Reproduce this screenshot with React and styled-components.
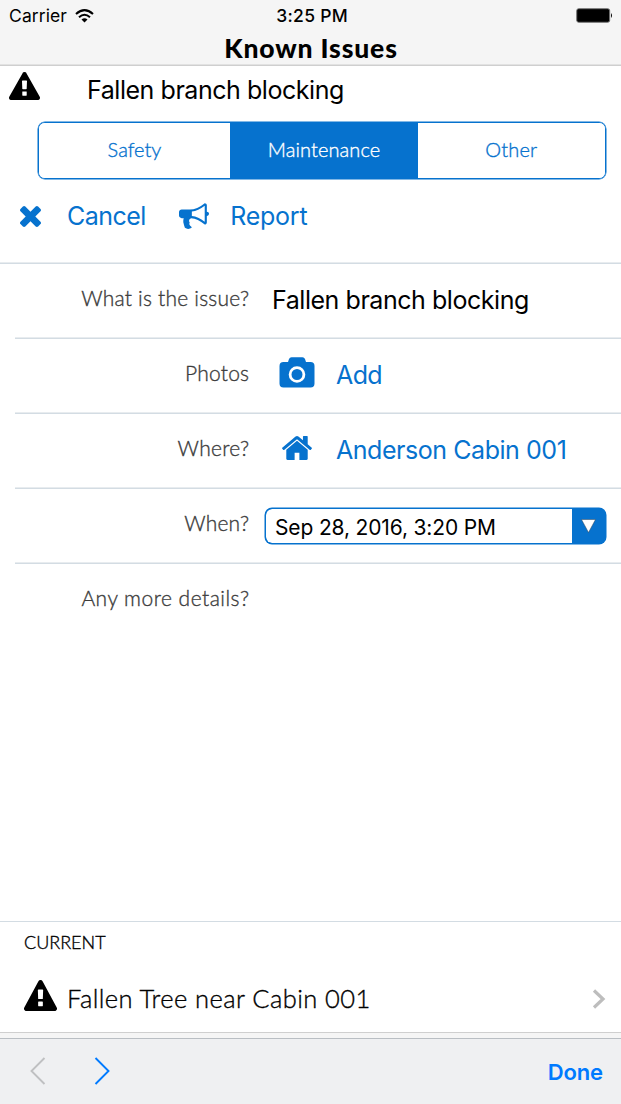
import React from "react";
import styled, { createGlobalStyle } from "styled-components";

const BLUE = "#0672ce";
const system = `Inter, "Liberation Sans", sans-serif`;
const brand = `Lato, "Open Sans", sans-serif`;

const GlobalStyle = createGlobalStyle`
  * { box-sizing: border-box; }
  body { margin: 0; background: #fff; }
  svg { display: block; flex: none; }
  button { border: 0; padding: 0; margin: 0; background: none; font: inherit; color: inherit; letter-spacing: inherit; }
`;

const Screen = styled.main`
  display: flex;
  flex-direction: column;
  width: 621px;
  height: 1104px;
  overflow: hidden;
  background: #fff;
  color: #000;
`;

const Text = styled.span`
  display: inline-block;
  font-family: ${(p) => (p.$brand ? brand : system)};
  font-size: ${(p) => p.$size}px;
  font-weight: ${(p) => p.$weight || (p.$brand ? 300 : 400)};
  -webkit-text-stroke: ${(p) => (p.$brand && !p.$weight ? "0.35px currentColor" : "0")};
  letter-spacing: ${(p) => p.$track || 0}px;
  margin-right: ${(p) => -(p.$track || 0)}px;
  line-height: 32px;
  white-space: nowrap;
`;

const Header = styled.header`
  height: 66px;
  flex: none;
  background: #f5f5f5;
  border-bottom: 1px solid #cfcfcf;
  box-shadow: inset 0 -1px 0 #e2e2e2;
`;

const StatusBar = styled.div`
  display: grid;
  grid-template-columns: 1fr auto 1fr;
  align-items: center;
  height: 32px;
  padding: 0 8px 0 9px;
`;

const Carrier = styled.div`
  display: flex;
  align-items: center;
  gap: 8px;
`;

const Clock = styled.div`
  padding-left: 2px;
`;

const Battery = styled.div`
  justify-self: end;
  padding-bottom: 1px;
`;

const Title = styled.h1`
  display: flex;
  justify-content: center;
  margin: 0;
  height: 32px;
`;

const Summary = styled.div`
  display: flex;
  height: 55px;
  flex: none;
  padding: 6px 9px 0;
  gap: 47px;
`;

const SummaryText = styled.div`
  padding-top: 2px;
`;

const Segments = styled.div`
  display: grid;
  grid-template-columns: 191px 188px 1fr;
  flex: none;
  height: 57px;
  margin: 1px 15.500px 1px 38px;
  border: 1px solid ${BLUE};
  box-shadow: 0 0 0 0.5px ${BLUE};
  border-radius: 7px;
  overflow: hidden;
`;

const Segment = styled.button`
  display: flex;
  justify-content: center;
  padding-top: 10px;
  background: ${(p) => (p.$active ? BLUE : "#fff")};
  color: ${(p) => (p.$active ? "#fff" : BLUE)};
`;

const Actions = styled.div`
  display: flex;
  flex: none;
  height: 84px;
  padding: 20px 20px 0;
  gap: 33px;
  color: ${BLUE};
  border-bottom: 1px solid #d3dce3;
  box-shadow: inset 0 -1px 0 #e8ecef;
`;

const Action = styled.button`
  display: flex;
  height: 32px;
  align-items: center;
  gap: ${(p) => p.$gap}px;
`;

const Form = styled.section`
  flex: 1;
  padding-left: 15px;
`;

const Row = styled.div`
  display: flex;
  align-items: center;
  height: 75px;
  padding: 0 15px 2px 0;
  border-bottom: 1px solid ${(p) => (p.$last ? "transparent" : "#d3dce3")};
  box-shadow: ${(p) => (p.$last ? "none" : "inset 0 -1px 0 #e8ecef")};
`;

const Label = styled.div`
  width: 234px;
  height: 36px;
  flex: none;
  text-align: right;
  color: #3c3c3c;
`;

const Value = styled.div`
  padding-left: 23px;
`;

const LinkValue = styled.button`
  display: flex;
  align-items: center;
  padding-left: 30px;
  color: ${BLUE};
`;

const IconSlot = styled.span`
  display: flex;
  justify-content: center;
  width: 36px;
  height: ${(p) => p.$height}px;
  margin-right: 21px;
`;

const DateSelect = styled.div`
  display: flex;
  flex: 1;
  height: 36px;
  margin: 1px 0.500px 0 15.500px;
  border: 1px solid ${BLUE};
  box-shadow: 0 0 0 0.5px ${BLUE};
  border-radius: 7px;
  overflow: hidden;
  background: ${BLUE};
`;

const DateText = styled.div`
  flex: 1;
  padding: 3px 0 0 9.500px;
  background: #fff;
  border-radius: 6px 0 0 6px;
`;

const DropButton = styled.button`
  display: flex;
  align-items: center;
  justify-content: center;
  width: 33px;
  background: ${BLUE};
`;

const Current = styled.section`
  flex: none;
  height: 112px;
  padding: 4px 15px 0 24px;
  border-top: 1px solid #d3dce3;
  border-bottom: 1px solid #cfcfcf;
`;

const IssueRow = styled.div`
  display: flex;
  align-items: flex-start;
  height: 34px;
  margin-top: 22px;
`;

const IssueName = styled.div`
  flex: 1;
  padding: 2px 0 0 10px;
`;

const Disclosure = styled.div`
  padding-top: 9px;
`;

const Strip = styled.div`
  flex: none;
  height: 5px;
  background: #f5f5f5;
`;

const Toolbar = styled.footer`
  display: flex;
  flex: none;
  align-items: center;
  height: 66px;
  padding: 0 18px 2px 30px;
  gap: 48px;
  background: #eff0f2;
  border-top: 1px solid #b9bec3;
`;

const Done = styled.button`
  margin-left: auto;
  padding-top: 3px;
  color: #007aff;
`;

const Warning = ({ width, height }) => (
  <svg width={width} height={height} viewBox="0 0 1792 1664" preserveAspectRatio="none">
    <path d="M1024 1375v-190q0-14-9.5-23.5t-22.5-9.5h-192q-13 0-22.5 9.5t-9.5 23.5v190q0 14 9.5 23.5t22.5 9.5h192q13 0 22.5-9.5t9.5-23.5zm-2-374l18-459q0-12-10-19-13-11-24-11h-220q-11 0-24 11-10 7-10 21l17 457q0 10 10 16.5t24 6.5h185q14 0 23.5-6.5t10.5-16.5zm-14-934l768 1408q35 63-2 126-17 29-46.5 46t-63.5 17h-1536q-34 0-63.5-17t-46.5-46q-37-63-2-126l768-1408q17-31 47-49t65-18 65 18 47 49z" />
  </svg>
);

const Wifi = () => (
  <svg width="19" height="14" viewBox="0 0 19 14" fill="none" stroke="#000" strokeWidth="2">
    <path d="M1 5Q9.500-2.800 18 5M4 8.200Q9.500 3.200 15 8.200" />
    <path d="M6.500 10.500Q9.500 7.800 12.500 10.500L9.500 13.500Z" fill="#000" stroke="none" />
  </svg>
);

const BatteryIcon = () => (
  <svg width="37" height="15" viewBox="0 0 37 15">
    <rect x=".7" y=".7" width="33" height="13.600" rx="2" stroke="#777" fill="#000" />
    <path d="M35 5Q37 7.500 35 10Z" />
  </svg>
);

const Cross = () => (
  <svg width="21" height="21" viewBox="302 366 1188 1188" fill="currentColor">
    <path d="M1490 1322q0 40-28 68l-136 136q-28 28-68 28t-68-28l-294-294-294 294q-28 28-68 28t-68-28l-136-136q-28-28-28-68t28-68l294-294-294-294q-28-28-28-68t28-68l136-136q28-28 68-28t68 28l294 294 294-294q28-28 68-28t68 28l136 136q28 28 28 68t-28 68l-294 294 294 294q28 28 28 68z" />
  </svg>
);

const Bullhorn = () => (
  <svg width="30" height="30" viewBox="0 0 1792 1792" fill="currentColor">
    <path d="M1664 640q53 0 90.5 37.5t37.5 90.5-37.5 90.5-90.5 37.5v384q0 52-38 90t-90 38q-417-347-812-380-58 19-91 66t-31 100.5 40 92.5q-20 33-23 65.5t6 58 33.5 55 48 50 61.5 50.5q-29 58-111.5 83t-168.5 11.5-132-55.5q-7-23-29.5-87.5t-32-94.5-23-89-15-101 3.5-98.500 22-110.500h-122q-66 0-113-47t-47-113v-192q0-66 47-113t113-47h480q435 0 896-384 52 0 90 38t38 90v384zm-128 604v-954q-394 302-768 343v270q377 42 768 341z" />
  </svg>
);

const Camera = () => (
  <svg width="36" height="31" viewBox="0 0 36 31" fill="currentColor">
    <path d="M4.500 5H9L10 2Q10.700 .3 12.500 .3H23.500Q25.300 .3 26 2L27 5H31.500Q35.500 5 35.500 9V26.500Q35.500 30.500 31.500 30.500H4.500Q.5 30.500 .5 26.500V9Q.5 5 4.500 5Z" />
    <circle cx="18" cy="17.500" r="6.900" fill="none" stroke="#fff" strokeWidth="2.800" />
  </svg>
);

const Home = () => (
  <svg width="30" height="24" viewBox="25 253 1614 1285" preserveAspectRatio="none" fill="currentColor">
    <path d="M1408 992v480q0 26-19 45t-45 19h-384v-384h-256v384h-384q-26 0-45-19t-19-45v-480q0-1 .5-3t.5-3l575-474 575 474q1 2 1 6zm223-69l-62 74q-8 9-21 11h-3q-13 0-21-7l-692-577-692 577q-12 8-24 7-13-2-21-11l-62-74q-8-10-7-23.500t11-21.500l719-599q32-26 76-26t76 26l244 204v-195q0-14 9-23t23-9h192q14 0 23 9t9 23v408l219 182q10 8 11 21.500t-7 23.500z" />
  </svg>
);

const Chevron = ({ left, color }) => (
  <svg width="16" height="28" viewBox="0 0 16 28" fill="none" stroke={color} strokeWidth="1.900">
    <path d={left ? "M14.500 1L1.500 14L14.500 27" : "M1.500 1L14.500 14L1.500 27"} />
  </svg>
);

export default function App() {
  return (
    <Screen>
      <GlobalStyle />
      <Header>
        <StatusBar>
          <Carrier>
            <Text $size={17.500} $track={0.1}>Carrier</Text>
            <Wifi />
          </Carrier>
          <Clock><Text $size={17.500} $weight={500} $track={0.3}>3:25 PM</Text></Clock>
          <Battery><BatteryIcon /></Battery>
        </StatusBar>
        <Title><Text $brand $size={26.500} $weight={900} $track={0.85}>Known Issues</Text></Title>
      </Header>

      <Summary>
        <Warning width={31} height={28} />
        <SummaryText><Text $size={25} $track={-0.45}>Fallen branch blocking</Text></SummaryText>
      </Summary>

      <Segments>
        <Segment><Text $brand $size={20}>Safety</Text></Segment>
        <Segment $active><Text $brand $size={20} $track={0.1}>Maintenance</Text></Segment>
        <Segment><Text $brand $size={20} $track={0.2}>Other</Text></Segment>
      </Segments>

      <Actions>
        <Action $gap={26}><Cross /><Text $size={25} $track={-0.55}>Cancel</Text></Action>
        <Action $gap={21}><Bullhorn /><Text $size={25} $track={-0.25}>Report</Text></Action>
      </Actions>

      <Form>
        <Row>
          <Label><Text $brand $size={21} $track={0.22}>What is the issue?</Text></Label>
          <Value><Text $size={25} $track={-0.45}>Fallen branch blocking</Text></Value>
        </Row>
        <Row>
          <Label><Text $brand $size={21} $track={0.2}>Photos</Text></Label>
          <LinkValue><IconSlot $height={36}><Camera /></IconSlot><Text $size={25} $track={-0.6}>Add</Text></LinkValue>
        </Row>
        <Row>
          <Label><Text $brand $size={21} $track={0.25}>Where?</Text></Label>
          <LinkValue><IconSlot $height={28}><Home /></IconSlot><Text $size={25} $track={-0.45}>Anderson Cabin 001</Text></LinkValue>
        </Row>
        <Row>
          <Label><Text $brand $size={21} $track={0.2}>When?</Text></Label>
          <DateSelect>
            <DateText><Text $size={21} $track={-0.15}>Sep 28, 2016, 3:20 PM</Text></DateText>
            <DropButton>
              <svg width="15" height="14" viewBox="0 0 15 14"><path d="M.5 .5H14.500L7.500 13.500Z" fill="#fff" stroke="#345" strokeWidth=".5" /></svg>
            </DropButton>
          </DateSelect>
        </Row>
        <Row $last>
          <Label><Text $brand $size={21} $track={0.48}>Any more details?</Text></Label>
        </Row>
      </Form>

      <Current>
        <Text $brand $size={18}>CURRENT</Text>
        <IssueRow>
          <Warning width={33} height={31} />
          <IssueName><Text $brand $size={25.500} $track={0.42}>Fallen Tree near Cabin 001</Text></IssueName>
          <Disclosure>
            <svg width="14" height="20" viewBox="0 0 14 20" fill="none" stroke="#bdbdbd" strokeWidth="3.200"><path d="M2 1.500L11 10L2 18.500" /></svg>
          </Disclosure>
        </IssueRow>
      </Current>
      <Strip />
      <Toolbar>
        <Chevron left color="#bfc0c2" />
        <Chevron color="#007aff" />
        <Done><Text $size={22} $weight={600} $track={-0.2}>Done</Text></Done>
      </Toolbar>
    </Screen>
  );
}
